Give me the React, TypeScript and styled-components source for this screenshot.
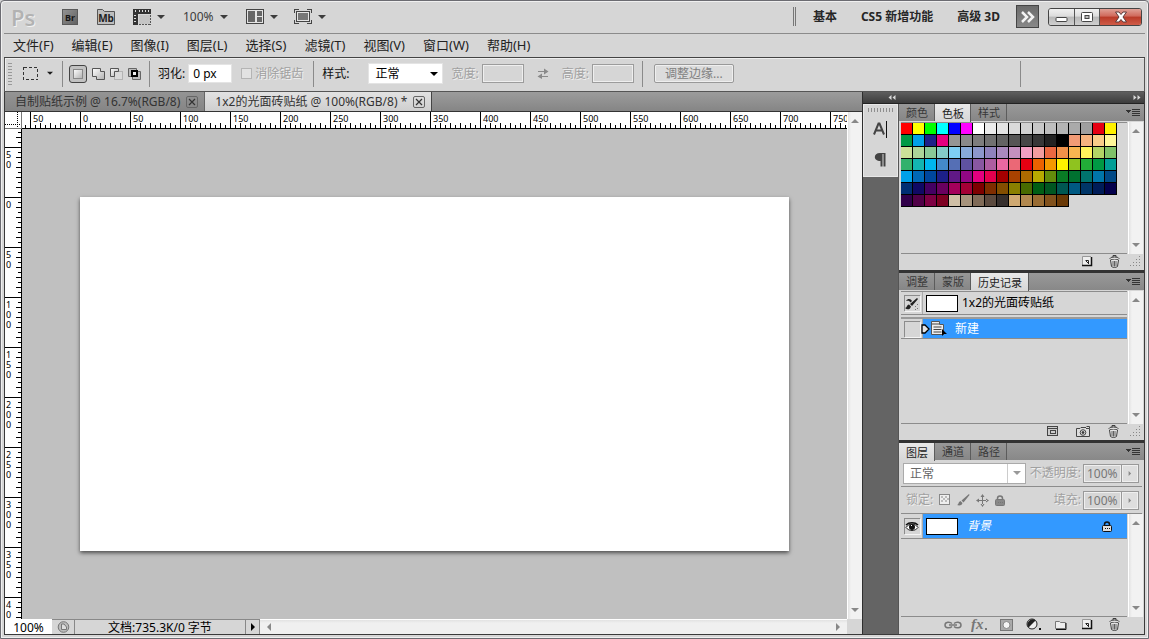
import React from "react";
import styled, { createGlobalStyle, css } from "styled-components";

const FONT = '"Noto Sans", "Noto Sans CJK SC", sans-serif';

const GlobalStyle = createGlobalStyle`
  *, *::before, *::after { box-sizing: border-box; }
  body { margin: 0; background: #d6d6d6; font-family: ${FONT}; font-size: 12px; color: #1c1c1c; }
  button, input, select { font-family: inherit; font-size: 12px; color: inherit; margin: 0; padding: 0; border: 0; border-radius: 0; background: none; }
  h1 { margin: 0; }
  svg { display: block; flex: none; }
`;

/* ---------- window frame ---------- */

const Window = styled.div`
  display: flex;
  flex-direction: column;
  height: 100vh;
  min-height: 560px;
  padding: 0 3px 3px;
  overflow: hidden;
  background: #d6d6d6;
  border: 1px solid #6c6c72;
  border-radius: 4px 4px 0 0;
  box-shadow: inset 1px 1px 0 #f0f0f0, inset -1px -1px 0 #f0f0f0;
`;

const TitleBar = styled.header`
  display: flex;
  align-items: center;
  flex: none;
  height: 33px;
  padding: 0 3px 1px 7px;
  border-bottom: 1px solid #8b8b8b;
  white-space: nowrap;
`;

const Logo = styled.h1`
  width: 51px;
  font: 600 22px/30px "Open Sans", sans-serif;
  color: #b2b2b2;
  text-shadow: 1px 1px 0 #f2f2f2;
`;

const ToolButton = styled.button<{ $w: number }>`
  display: flex;
  align-items: center;
  gap: 6px;
  flex: none;
  width: ${(p) => p.$w}px;
  height: 24px;
  color: #3c3c3c;
`;

const Spacer = styled.div`
  flex: 1;
`;

const DoubleRule = styled.div`
  width: 3px;
  height: 19px;
  margin-right: 17px;
  border: solid #777;
  border-width: 0 1px;
`;

const Workspaces = styled.nav`
  display: flex;
  align-items: center;
  gap: 24px;
  margin-right: 16px;
`;

const WorkspaceButton = styled.button`
  font-weight: 700;
  line-height: 20px;
  color: #262626;
`;

const MoreButton = styled.button`
  display: flex;
  align-items: center;
  justify-content: center;
  width: 23px;
  height: 23px;
  margin-right: 9px;
  background: linear-gradient(#6b6b6b, #888);
  border: 1px solid #444;
`;

const WindowButtons = styled.div`
  display: flex;
  height: 18px;
  border: 1px solid #444;
  border-radius: 3px;
  overflow: hidden;
`;

const WindowButton = styled.button<{ $close?: boolean }>`
  display: flex;
  align-items: center;
  justify-content: center;
  width: ${(p) => (p.$close ? 42 : 25)}px;
  background: ${(p) =>
    p.$close
      ? "linear-gradient(#e0a096, #d0685a 45%, #b93a28 50%, #cf5c48)"
      : "linear-gradient(#f0f0f0, #dcdcdc 45%, #b8b8b8 50%, #cfcfcf)"};
  & + & { border-left: 1px solid #555; }
`;

const MenuBar = styled.nav`
  display: flex;
  align-items: center;
  gap: 18px;
  flex: none;
  height: 24px;
  padding: 0 9px 2px;
  border-bottom: 1px solid #444;
`;

const MenuItem = styled.button`
  font-size: 13px;
  line-height: 20px;
  color: #222;
  white-space: nowrap;
`;

/* ---------- options bar ---------- */

const OptionsBar = styled.section`
  display: flex;
  align-items: center;
  flex: none;
  height: 34px;
  padding: 0 0 2px 3px;
  border: solid #555;
  border-width: 0 1px 1px;
  box-shadow: inset 1px 1px 0 #efefef;
  white-space: nowrap;
`;

const Grip = styled.div`
  width: 4px;
  height: 24px;
  background: radial-gradient(circle, #999 0 1px, transparent 1px) 0 0 / 2px 3px;
`;

const Rule = styled.div<{ $l: number; $r: number }>`
  width: 1px;
  height: 26px;
  flex: none;
  margin: 0 ${(p) => p.$r}px 0 ${(p) => p.$l}px;
  background: #8a8a8a;
`;

const ToolPicker = styled.button`
  display: flex;
  align-items: center;
  gap: 9px;
  margin-left: 11px;
`;

const ModeGroup = styled.div`
  display: flex;
  align-items: center;
  gap: 4px;
`;

const ModeButton = styled.button<{ $on?: boolean }>`
  display: flex;
  align-items: center;
  justify-content: center;
  width: ${(p) => (p.$on ? 18 : 14)}px;
  height: 18px;
  ${(p) =>
    p.$on &&
    css`
      border: 1px solid #444;
      border-radius: 3px;
      background: #c2c2c2;
    `}
`;

const Label = styled.label<{ $off?: boolean; $before?: number }>`
  display: flex;
  align-items: center;
  margin-left: ${(p) => p.$before ?? 0}px;
  line-height: 18px;
  color: ${(p) => (p.$off ? "#a0a0a0" : "#111")};
  ${(p) => p.$off && "text-shadow: 1px 1px 0 #f0f0f0;"}
`;

const TextBox = styled.input<{ $w: number }>`
  width: ${(p) => p.$w}px;
  height: 19px;
  margin-left: 3px;
  padding: 0 4px;
  background: #fff;
  border: 1px solid #e4e4e4;
  color: #000;
  &:disabled { background: #d6d6d6; border: 1px solid #9c9c9c; box-shadow: inset 0 0 0 1px #efefef; }
`;

const TickBox = styled.input`
  appearance: none;
  width: 11px;
  height: 11px;
  margin-right: 3px;
  background: #e2e2e2;
  border: 1px solid #b4b4b4;
`;

const SelectWrap = styled.span<{ $w: number; $off?: boolean; $before?: number }>`
  display: flex;
  align-items: center;
  width: ${(p) => p.$w}px;
  height: 21px;
  margin-left: ${(p) => p.$before ?? 0}px;
  padding-right: 4px;
  background: #fff;
  border: 1px solid ${(p) => (p.$off ? "#aaa" : "#e4e4e4")};
  color: ${(p) => (p.$off ? "#999" : "#000")};
`;

const Select = styled.select<{ $divided?: boolean }>`
  appearance: none;
  flex: 1;
  min-width: 0;
  height: 100%;
  padding-left: 6px;
  outline: 0;
  color: ${(p) => (p.$divided ? "#666" : "#000")};
  ${(p) => p.$divided && "margin-right: 5px; border-right: 1px solid #ccc;"}
`;

const SwapButton = styled.button`
  margin: 0 0 0 13px;
`;

const EdgeButton = styled.button`
  width: 80px;
  height: 19px;
  line-height: 17px;
  color: #808080;
  background: #dcdcdc;
  border: 1px solid #999;
  border-radius: 2px;
  box-shadow: inset 0 0 0 1px #efefef;
`;

/* ---------- main area ---------- */

const Main = styled.main`
  display: flex;
  flex: 1;
  min-height: 0;
  border: solid #3a3a3a;
  border-width: 0 1px 1px;
`;

const DocumentArea = styled.section`
  display: flex;
  flex-direction: column;
  flex: 1;
  min-width: 0;
`;

const DocTabs = styled.div`
  display: flex;
  flex: none;
  height: 20px;
  background: linear-gradient(#9c9c9c, #858585);
  border-bottom: 1px solid #333;
`;

const DocTab = styled.div<{ $on?: boolean }>`
  display: flex;
  align-items: center;
  gap: 6px;
  padding: 0 6px 0 10px;
  color: #333;
  white-space: nowrap;
  background: ${(p) => (p.$on ? "linear-gradient(#e2e2e2, #cfcfcf)" : "linear-gradient(#949494, #858585)")};
  border-right: 1px solid ${(p) => (p.$on ? "#444" : "#666")};
`;

const DocTabName = styled.button`
  line-height: 18px;
`;

const CloseTab = styled.button`
  display: flex;
  align-items: center;
  justify-content: center;
  width: 12px;
  height: 12px;
  border: 1px solid #666;
  border-radius: 2px;
`;

const Workspace = styled.div`
  display: grid;
  grid-template-columns: 17px minmax(0, 1fr) 15px;
  grid-template-rows: 17px minmax(0, 1fr) 15px;
  flex: 1;
  min-height: 0;
`;

const RulerCorner = styled.div`
  background:
    repeating-linear-gradient(90deg, #000 0 1px, transparent 1px 2px) 0 12px / 100% 1px no-repeat,
    repeating-linear-gradient(#000 0 1px, transparent 1px 2px) 12px 0 / 1px 100% no-repeat,
    #fff;
  border: solid #777;
  border-width: 0 1px 1px 0;
`;

const RulerTop = styled.div`
  display: flex;
  overflow: hidden;
  padding-left: 8px;
  background:
    repeating-linear-gradient(90deg, transparent 0 3px, #000 3px 4px, transparent 4px 10px) 0 100% / 8px 3px no-repeat,
    #fff;
  border-bottom: 1px solid #000;
`;

const TopUnit = styled.span`
  flex: none;
  width: 50px;
  padding-left: 2px;
  font-size: 9px;
  line-height: 13px;
  color: #000;
  border-left: 1px solid #000;
  background:
    repeating-linear-gradient(90deg, transparent 0 4px, #000 4px 5px, transparent 5px 10px) 0 100% / 100% 3px no-repeat,
    repeating-linear-gradient(90deg, transparent 0 9px, #000 9px 10px) 0 100% / 49px 5px no-repeat;
`;

const RulerLeft = styled.div`
  display: flex;
  flex-direction: column;
  overflow: hidden;
  padding-top: 18px;
  background:
    repeating-linear-gradient(transparent 0 3px, #000 3px 4px, transparent 4px 10px) 100% 0 / 3px 18px no-repeat,
    repeating-linear-gradient(transparent 0 8px, #000 8px 9px, transparent 9px 18px) 100% 0 / 5px 18px no-repeat,
    #fff;
  border-right: 1px solid #000;
`;

const LeftUnit = styled.span`
  display: flex;
  flex-direction: column;
  flex: none;
  height: 50px;
  padding: 2px 0 0 1px;
  font-size: 9px;
  line-height: 10px;
  color: #000;
  border-top: 1px solid #000;
  background:
    repeating-linear-gradient(transparent 0 4px, #000 4px 5px, transparent 5px 10px) 100% 0 / 3px 100% no-repeat,
    repeating-linear-gradient(transparent 0 9px, #000 9px 10px) 100% 0 / 5px 49px no-repeat;
`;

const Canvas = styled.div`
  display: flex;
  align-items: center;
  justify-content: center;
  overflow: hidden;
  background: #c0c0c0;
`;

const Paper = styled.div`
  flex: none;
  width: 709px;
  height: 354px;
  background: #fff;
  box-shadow: 0 2px 4px rgba(0, 0, 0, 0.6);
`;

const VScroll = styled.div`
  display: flex;
  flex-direction: column;
  align-items: center;
  justify-content: space-between;
  width: 15px;
  padding: 6px 0;
  color: #888;
  background: linear-gradient(90deg, #fff 0 1px, #e2e2e2 1px, #f2f2f2 4px);
`;

const TallScroll = styled(VScroll)`
  grid-column: 3;
  grid-row: 1 / 3;
`;

const StatusBar = styled.footer`
  display: flex;
  align-items: stretch;
  grid-column: 1 / 3;
  min-width: 0;
  color: #000;
`;

const StatusZoom = styled.input`
  width: 47px;
  padding: 2px 0 0;
  text-align: center;
  background: #fff;
`;

const StatusCell = styled.div<{ $w: number }>`
  display: flex;
  align-items: center;
  justify-content: center;
  flex: none;
  width: ${(p) => p.$w}px;
  line-height: 15px;
  white-space: nowrap;
  background: #d6d6d6;
  border: solid #888;
  border-width: 1px 1px 0 0;
`;

const HScroll = styled.div`
  display: flex;
  align-items: center;
  justify-content: space-between;
  flex: 1;
  padding: 0 6px;
  color: #888;
  background: linear-gradient(#fff 0 1px, #e2e2e2 1px, #f0f0f0 4px);
`;

const ScrollButton = styled.button`
  display: flex;
`;

/* ---------- dock ---------- */

const Dock = styled.aside`
  display: flex;
  flex-direction: column;
  flex: none;
  width: 282px;
  border-left: 1px solid #2e2e2e;
`;

const DockHeader = styled.div`
  display: flex;
  align-items: center;
  justify-content: space-between;
  flex: none;
  height: 12px;
  padding: 0 3px 0 25px;
  color: #d8d8d8;
  background: linear-gradient(#5e5e5e, #3c3c3c);
  border-bottom: 1px solid #222;
`;

const DockBody = styled.div`
  display: flex;
  flex: 1;
  min-height: 0;
  background: #646464;
`;

const IconColumn = styled.div`
  width: 36px;
  border-right: 1px solid #555;
`;

const IconStack = styled.div`
  display: flex;
  flex-direction: column;
  align-items: center;
  gap: 3px;
  height: 73px;
  padding-top: 3px;
  background: #d6d6d6;
  border: 1px solid #e8e8e8;
`;

const DotGrip = styled.div`
  flex: none;
  width: 27px;
  height: 4px;
  background: radial-gradient(circle, #8e8e8e 0 1px, transparent 1px) 0 0 / 3px 2px;
`;

const StackButton = styled.button`
  display: flex;
  align-items: center;
  justify-content: center;
  flex: none;
  height: 28px;
`;

const LockButton = styled.button`
  display: flex;
  align-items: center;
  height: 18px;
`;

const Panels = styled.div`
  display: flex;
  flex-direction: column;
  gap: 3px;
  flex: 1;
  min-width: 0;
  background: #333;
`;

const Panel = styled.section<{ $h?: number }>`
  display: flex;
  flex-direction: column;
  ${(p) => (p.$h ? `flex: none; height: ${p.$h}px;` : "flex: 1; min-height: 0;")}
  background: #d6d6d6;
`;

const PanelTabs = styled.div`
  display: flex;
  flex: none;
  height: 17px;
  padding-right: 4px;
  background: linear-gradient(#999, #888);
`;

const PanelTab = styled.button<{ $on?: boolean }>`
  height: ${(p) => (p.$on ? 18 : 17)}px;
  padding: 1px 6px 0 7px;
  font-size: 11px;
  line-height: 16px;
  color: ${(p) => (p.$on ? "#222" : "#383838")};
  background: ${(p) => (p.$on ? "linear-gradient(#e8e8e8, #d6d6d6)" : "linear-gradient(#989898, #868686)")};
  border-right: 1px solid #5c5c5c;
`;

const PanelMenu = styled.button`
  display: flex;
  align-items: center;
  margin-left: auto;
`;

const PanelBody = styled.div`
  display: flex;
  flex: 1;
  min-height: 0;
  padding: 1px 1px 0 2px;
`;

const PanelList = styled.div`
  flex: 1;
  min-width: 0;
  margin-right: 1px;
  border: solid #8c8c8c;
  border-width: 1px 0;
`;

const FooterRow = styled.div`
  display: flex;
  flex: none;
  justify-content: flex-end;
  padding-right: 1px;
`;

const PanelFooter = styled.div<{ $slot: number; $h: number }>`
  display: grid;
  grid-auto-flow: column;
  grid-auto-columns: ${(p) => p.$slot}px;
  justify-content: end;
  align-items: center;
  flex: none;
  height: ${(p) => p.$h}px;
  padding-bottom: 2px;
  color: #3c3c3c;
`;

const FooterButton = styled.button`
  display: flex;
  justify-content: center;
`;

const Resizer = styled.div`
  align-self: flex-end;
  width: 15px;
  height: 14px;
  padding-left: 2px;
`;

const Swatches = styled.div`
  display: grid;
  grid-template-columns: repeat(18, 12px);
`;

const Swatch = styled.button<{ $c: string }>`
  height: 12px;
  background: ${(p) => p.$c};
  border: solid #000;
  border-width: 0 1px 1px 0;
`;

const HistoryRow = styled.div<{ $h: number }>`
  display: flex;
  align-items: center;
  height: ${(p) => p.$h}px;
  border-bottom: 1px solid #8c8c8c;
  color: #000;
  line-height: 16px;
`;

const MarkCell = styled.button`
  display: flex;
  align-items: center;
  justify-content: center;
  flex: none;
  align-self: stretch;
  width: 22px;
  border-right: 1px solid #aaa;
`;

const MarkBox = styled.span`
  display: flex;
  align-items: center;
  justify-content: center;
  width: 16px;
  height: 16px;
  border: solid #8c8c8c;
  border-width: 1px 0 0 1px;
  box-shadow: 1px 1px 0 #f4f4f4;
`;

const Thumb = styled.span`
  flex: none;
  width: 32px;
  height: 17px;
  margin: 0 4px 0 3px;
  background: #fff;
  border: 1px solid #000;
`;

const Selected = styled.div`
  display: flex;
  align-items: center;
  flex: 1;
  align-self: stretch;
  color: #fff;
  background: #3399ff;
`;

const StepMark = styled.span`
  width: 10px;
  margin-left: -2px;
`;

const StepName = styled.span`
  padding-left: 8px;
`;

const HistoryGap = styled.div`
  height: 4px;
  border-bottom: 2px solid #9a9a9a;
`;

const LayerName = styled.span`
  flex: 1;
  padding-left: 5px;
  font-style: italic;
`;

const LayerLock = styled.span`
  padding-right: 15px;
`;

const LayerControls = styled.div`
  display: flex;
  align-items: center;
  justify-content: space-between;
  flex: none;
  height: 27px;
  margin: 0 2px;
  padding: 0 3px 0 2px;
  border-bottom: 1px solid #8c8c8c;
  white-space: nowrap;
`;

const LayerBody = styled(PanelBody)`
  padding-top: 0;
`;

const LayerList = styled(PanelList)`
  border-top: 0;
`;

const Locks = styled.div`
  display: flex;
  align-items: center;
  gap: 6px;
  padding-left: 3px;
  color: #8c8c8c;
`;

const PercentField = styled.span`
  display: flex;
  align-items: center;
  margin-left: 2px;
`;

const PercentInput = styled.input`
  width: 39px;
  height: 19px;
  padding-left: 3px;
  color: #777;
  background: #d6d6d6;
  border: 1px solid #999;
  box-shadow: inset 0 0 0 1px #efefef;
`;

const PercentArrow = styled.button`
  display: flex;
  align-items: center;
  justify-content: center;
  width: 17px;
  height: 19px;
  color: #888;
  background: #dedede;
  border: 1px solid #999;
  border-left: 0;
  box-shadow: inset 0 0 0 1px #efefef;
`;

/* ---------- icons ---------- */

type Dir = "up" | "down" | "left" | "right";

const arrowPaths: Record<Dir, string> = {
  up: "M0 5L4 1L8 5Z",
  down: "M0 1L4 5L8 1Z",
  left: "M5 0L1 4L5 8Z",
  right: "M1 0L5 4L1 8Z",
};

const Arrow = ({ dir = "down", size = 8 }: { dir?: Dir; size?: number }) => {
  const wide = dir === "up" || dir === "down";
  return (
    <svg width={wide ? size : (size * 6) / 8} height={wide ? (size * 6) / 8 : size} viewBox={wide ? "0 0 8 6" : "0 0 6 8"}>
      <path d={arrowPaths[dir]} fill="currentColor" />
    </svg>
  );
};

const BridgeIcon = () => (
  <svg width="16" height="16">
    <defs>
      <linearGradient id="br" x2="1" y2="1">
        <stop stopColor="#949494" />
        <stop offset="1" stopColor="#606060" />
      </linearGradient>
    </defs>
    <rect x=".5" y=".5" width="15" height="15" fill="url(#br)" stroke="#5a5a5a" />
    <text x="8" y="11.5" textAnchor="middle" fontSize="9" fontWeight="700" fill="#161616">Br</text>
  </svg>
);

const MiniBridgeIcon = () => (
  <svg width="19" height="16">
    <path d="M.5 15.500V.5H5.500L7.500 2.500H17.500V15.500Z" fill="#bdbdbd" stroke="#555" />
    <text x="9" y="12.500" textAnchor="middle" fontSize="10" fontWeight="700" fill="#222">Mb</text>
  </svg>
);

const ExtrasIcon = () => (
  <svg width="18" height="16" shapeRendering="crispEdges">
    <path d="M0 0H18V5H5V16H0Z" fill="#333" />
    <path d="M2 1h1v2H2zM6 1h1v2H6zM9 1h1v2H9zM12 1h1v2h-1zM15 1h1v2h-1zM1 6h2v1H1zM1 9h2v1H1zM1 12h2v1H1z" fill="#ddd" />
    <rect x="6" y="6" width="11" height="9" fill="#c4c4c4" />
    <path d="M17.500 6V16M6 15.500H18" stroke="#555" strokeDasharray="2 1" fill="none" />
  </svg>
);

const ArrangeIcon = () => (
  <svg width="18" height="15" shapeRendering="crispEdges">
    <rect x=".5" y=".5" width="17" height="14" fill="#e4e4e4" stroke="#444" />
    <path d="M2 2h7v11H2zM11 2h5v5h-5zM11 8h5v5h-5z" fill="#666" />
  </svg>
);

const ScreenIcon = () => (
  <svg width="18" height="15" shapeRendering="crispEdges">
    <path d="M.5 4V.5H5M13 .5H17.500V4M17.500 11V14.500H13M5 14.500H.5V11" fill="none" stroke="#444" />
    <rect x="2.500" y="2.500" width="13" height="10" fill="#e4e4e4" stroke="#444" />
    <rect x="4" y="4" width="10" height="7" fill="#777" />
  </svg>
);

const ChevronsIcon = () => (
  <svg width="15" height="12" fill="none" stroke="#f2f2f2" strokeWidth="2.500">
    <path d="M2 1L7 6L2 11M8 1L13 6L8 11" />
  </svg>
);

const MinimizeIcon = () => (
  <svg width="13" height="10">
    <rect x="1" y="5.500" width="11" height="4" rx="1" fill="#fff" stroke="#444" />
  </svg>
);

const MaximizeIcon = () => (
  <svg width="12" height="10">
    <rect x=".5" y=".5" width="11" height="9" rx="1" fill="#fff" stroke="#444" />
    <rect x="4" y="3.500" width="4" height="3" fill="#bbb" stroke="#444" />
  </svg>
);

const CloseIcon = () => (
  <svg width="14" height="12">
    <path d="M1.500 1H5L7 3.500L9 1H12.500L9 6L12.500 11H9L7 8.500L5 11H1.500L5 6Z" fill="#fff" stroke="#5c3a3a" />
  </svg>
);

const MarqueeIcon = () => (
  <svg width="15" height="13" shapeRendering="crispEdges">
    <rect x=".5" y=".5" width="14" height="12" fill="none" stroke="#333" strokeDasharray="3 2" />
  </svg>
);

const modes = [
  { name: "新选区", art: <rect x="2.500" y="2.500" width="9" height="9" fill="url(#mode)" stroke="#888" /> },
  { name: "添加到选区", art: <path d="M1.500 1.500H9.500V4.500H13.500V12.500H5.500V9.500H1.500Z" fill="url(#mode)" stroke="#555" /> },
  {
    name: "从选区减去",
    art: (
      <>
        <rect x="5.500" y="4.500" width="8" height="8" fill="#dadada" stroke="#b4b4b4" />
        <path d="M1.500 1.500H9.500V4.500H5.500V9.500H1.500Z" fill="url(#mode)" stroke="#555" />
      </>
    ),
  },
  {
    name: "与选区交叉",
    art: (
      <>
        <path d="M1.500 1.500H9.500V4.500H13.500V12.500H5.500V9.500H1.500Z" fill="#bbb" stroke="#666" />
        <rect x="5" y="4" width="5" height="5" fill="#eee" stroke="#000" strokeWidth="2" />
      </>
    ),
  },
];

const ModeIcon = ({ children }: { children: React.ReactNode }) => (
  <svg width="14" height="14">
    <defs>
      <linearGradient id="mode" x2="1" y2="1">
        <stop stopColor="#fff" />
        <stop offset="1" stopColor="#b0b0b0" />
      </linearGradient>
    </defs>
    {children}
  </svg>
);

const SwapIcon = () => (
  <svg width="12" height="11" fill="#8a8a8a">
    <path d="M1 3H7V0.500L11.500 3.500L7 6.500V4H1ZM11 8H5V5.500L.5 8.500L5 11V9H11Z" />
  </svg>
);

const SmallX = () => (
  <svg width="8" height="8" stroke="#333" strokeWidth="1.200">
    <path d="M1 1L7 7M7 1L1 7" />
  </svg>
);

const MenuLines = () => (
  <svg width="14" height="9" shapeRendering="crispEdges" fill="#333">
    <path d="M0 2H5L2.500 5ZM6 1h8v1H6zM6 3h8v1H6zM6 5h8v1H6zM6 7h8v1H6z" />
  </svg>
);

const CharacterIcon = () => (
  <svg width="15" height="18" stroke="#444" fill="none">
    <path d="M1 14.500L5.500 3.500H6.500L11 14.500M3 10.500H9" strokeWidth="2" />
    <path d="M13.500 1V18" stroke="#111" />
  </svg>
);

const ParagraphIcon = () => (
  <svg width="13" height="16">
    <path d="M6 1H11.500V14.500H9.500V2H8.500V14.500H6.500V9C-1 9 -1 1 6 1Z" fill="#444" />
  </svg>
);

const DoubleArrow = ({ dir }: { dir: "left" | "right" }) => (
  <svg width="8" height="5" fill="currentColor">
    <path d={dir === "left" ? "M3.500 0V5L.5 2.500ZM7.500 0V5L4.500 2.500Z" : "M.5 0V5L3.500 2.500ZM4.500 0V5L7.500 2.500Z"} />
  </svg>
);

const NewIcon = () => (
  <svg width="11" height="11">
    <rect x="1" y="1" width="8" height="8" fill="#eee" />
    <path d="M.5 9V.5H9" fill="none" stroke="#999" />
    <path d="M9.500 1V9.500H0" fill="none" stroke="#111" strokeWidth="1.500" />
    <path d="M3.500 4.500H6.500V8M4 5L6.500 7.500" fill="none" stroke="#222" />
  </svg>
);

const TrashIcon = () => (
  <svg width="11" height="13" fill="none" stroke="currentColor">
    <ellipse cx="5.500" cy="3.500" rx="4.500" ry="1.500" fill="#ddd" />
    <path d="M4 2V.5H7V2" />
    <path d="M1.500 5L2.500 11.500C4 12.700 7 12.700 8.500 11.500L9.500 5" fill="#e4e4e4" />
    <path d="M4 6V11M5.500 6V11.500M7 6V11" strokeWidth=".8" />
  </svg>
);

const SnapshotDocIcon = () => (
  <svg width="12" height="10" shapeRendering="crispEdges" fill="none" stroke="#444">
    <rect x=".5" y=".5" width="10" height="9" fill="#ccc" />
    <path d="M1 2.500H10M3 4.500H8V7.500H3Z" />
  </svg>
);

const CameraIcon = () => (
  <svg width="15" height="11" fill="none" stroke="#444">
    <path d="M.5 2.500H4L5 1.500H10M10.500 .5H13.500V2.500M.5 2.500V10.500H13.500V2.500H10" fill="#ddd" />
    <circle cx="7" cy="6.500" r="2.800" />
    <circle cx="7" cy="6.500" r="1" fill="#222" />
  </svg>
);

const ResizeDots = () => (
  <svg width="12" height="12" fill="#888" shapeRendering="crispEdges">
    {[0, 1, 2, 3].flatMap((r) =>
      Array.from({ length: r + 1 }, (_, c) => <rect key={`${r}-${c}`} x={9 - c * 3} y={r * 3} width="1" height="1" />)
    )}
  </svg>
);

const BrushSourceIcon = () => (
  <svg width="14" height="14" fill="#222">
    <path d="M0 11C2 11 1.500 8 4 7.500L6 9.500C5 13 2 13 0 11ZM5 7L12 1L13 2L7 9Z" />
    <path d="M1 4C3 1 6 2 7 4L5.500 5.500C4.500 3.500 3 3.500 1 4Z" />
    <path d="M10 9h1v1h-1zM12 7h1v1h-1zM12 11h1v1h-1zM10 12h1v1h-1z" fill="#777" />
  </svg>
);

const StepPointer = () => (
  <svg width="9" height="10">
    <path d="M1 1H4L8 5L4 9H1Z" fill="#e4e4e4" stroke="#000" strokeWidth="1.300" />
  </svg>
);

const StepIcon = () => (
  <svg width="16" height="15">
    <path d="M.5 13.500V.5H8.500V3.500H12.500V13.500Z" fill="#eee" stroke="#555" />
    <path d="M1 3H8M2.500 6H10.500M2.500 8.500H10.500M2.500 11H10.500" stroke="#444" />
    <path d="M11 8L16 13L13 13L11 15Z" fill="#000" />
  </svg>
);

const EyeIcon = () => (
  <svg width="14" height="10">
    <path d="M1 5.500C4 1 10 1 13 5.500C10 9.500 4 9.500 1 5.500Z" fill="#fff" stroke="#222" />
    <circle cx="7" cy="5" r="3" fill="#111" />
    <path d="M1 3C4 0 10 0 13 3" stroke="#111" strokeWidth="1.500" fill="none" />
    <rect x="6" y="3" width="1" height="1" fill="#fff" />
  </svg>
);

const LockIcon = ({ color = "#777", body = "#888" }: { color?: string; body?: string }) => (
  <svg width="10" height="11">
    <path d="M2.500 5V3.500C2.500 .2 7.500 .2 7.500 3.500V5" fill="none" stroke={color} strokeWidth="1.500" />
    <rect x=".5" y="4.500" width="9" height="6" rx="1" fill={body} stroke={color} />
    <path d="M3 7.500H8" stroke={color} strokeDasharray="1 1" />
  </svg>
);

const TransparencyIcon = () => (
  <svg width="12" height="12" shapeRendering="crispEdges">
    <rect x=".5" y=".5" width="10" height="10" fill="#eee" stroke="#888" />
    <path d="M2 2h2v2H2zM6 2h2v2H6zM4 4h2v2H4zM8 4h2v2H8zM2 6h2v2H2zM6 6h2v2H6z" fill="#bbb" />
  </svg>
);

const BrushIcon = () => (
  <svg width="13" height="12" fill="#777">
    <path d="M0 11C2 10.500 1 8 3.500 7L5.500 9C5 11.500 2 12 0 11ZM4.500 6.500L12 0L12.500 1L6.500 8.500Z" />
  </svg>
);

const MoveIcon = () => (
  <svg width="13" height="13" fill="#777">
    <path d="M6 2h1v9H6zM2 6h9v1H2zM6.500 0L8.500 3H4.500ZM6.500 13L8.500 10H4.500ZM0 6.500L3 4.500V8.500ZM13 6.500L10 4.500V8.500Z" />
  </svg>
);

const LinkIcon = () => (
  <svg width="18" height="8" fill="none" stroke="#777" strokeWidth="1.500">
    <path d="M8 2.500C6 .5 1 .5 1 4C1 7.500 6 7.500 8 5.500M10 2.500C12 .5 17 .5 17 4C17 7.500 12 7.500 10 5.500M5 4H13" />
  </svg>
);

const FxIcon = () => (
  <svg width="17" height="14" fill="#777">
    <text x="0" y="11" fontFamily="Liberation Serif, serif" fontStyle="italic" fontWeight="700" fontSize="15">fx</text>
    <rect x="14" y="10" width="2" height="2" />
  </svg>
);

const MaskIcon = () => (
  <svg width="14" height="12">
    <rect x=".5" y=".5" width="12" height="11" fill="#aaa" stroke="#777" />
    <circle cx="6.500" cy="6" r="3.500" fill="#f4f4f4" stroke="#888" />
  </svg>
);

const AdjustIcon = () => (
  <svg width="16" height="13">
    <circle cx="6" cy="6" r="5" fill="#eee" stroke="#222" />
    <path d="M9.500 2.500A5 5 0 0 0 2.500 9.500Z" fill="#222" />
    <rect x="13" y="10" width="2" height="2" fill="#111" />
  </svg>
);

const FolderIcon = () => (
  <svg width="12" height="10">
    <path d="M.5 8.500V1.500H4.500L5.500 2.500H10.500V8.500Z" fill="#eee" stroke="#777" />
    <path d="M11 3V9.500H1" stroke="#111" fill="none" />
  </svg>
);

const StatusIcon = () => (
  <svg width="13" height="12" fill="none" stroke="#777">
    <circle cx="6.500" cy="6" r="5.300" fill="#bbb" />
    <path d="M4.500 3V8.500H9.500V6L7 3Z" fill="#ddd" />
  </svg>
);

/* ---------- data ---------- */

const menus = ["文件(F)", "编辑(E)", "图像(I)", "图层(L)", "选择(S)", "滤镜(T)", "视图(V)", "窗口(W)", "帮助(H)"];
const workspaces = ["基本", "CS5 新增功能", "高级 3D"];
const topUnits = [50, ...Array.from({ length: 16 }, (_, i) => i * 50)];
const leftUnits = [50, ...Array.from({ length: 9 }, (_, i) => i * 50)];

const swatchColors = `
ff0000 ffff00 00ff00 00ffff 0000ff ff00ff ffffff ececec e4e4e4 dadada d1d1d1 c8c8c8 bebebe b4b4b4 aaaaaa 9f9f9f e60012 fff100
009944 00a0e9 1d2088 e4007f 959595 898989 7d7d7d 717171 636363 555555 464646 373737 222222 000000 f29b76 f6b37f facd89 fff799
cce198 acd598 89c997 84ccc9 7ecef4 88abda 8c97cb 8f82bc aa89bd c490bf f19ec2 f29c9f eb6841 f19149 f8b551 fff45c b3d465 80c269
32b16c 13b5b1 00b7ee 448aca 556fb5 5f52a0 8957a1 ae5da1 ea68a2 eb6876 e60012 eb6100 f39800 fff100 8fc31f 22ac38 009944 009e96
00a0e9 0068b7 00479d 1d2088 601986 920783 e4007f e5004f a40000 a84200 ac6a00 b7aa00 638c0b 097c25 007130 00736d 0075a9 004986
002e73 100964 440062 6a005f a4005b a40035 7d0000 7f2d00 834e00 8a8000 486a00 005e15 005621 005752 005982 003567 001c58 03004c
31004a 500047 7e0043 7d0022 cfbfa6 a6937c 806b58 5b4a3f 362f2d cfa972 b1884f 996c33 81511c 6a3906`
  .trim()
  .split(/\s+/);

/* ---------- composed parts ---------- */

const TabStrip = ({ tabs, active }: { tabs: string[]; active: number }) => (
  <PanelTabs role="tablist">
    {tabs.map((t, i) => (
      <PanelTab key={t} role="tab" aria-selected={i === active} $on={i === active}>
        {t}
      </PanelTab>
    ))}
    <PanelMenu aria-label="面板菜单">
      <MenuLines />
    </PanelMenu>
  </PanelTabs>
);

const PanelScroll = () => (
  <VScroll>
    <ScrollButton aria-label="向上滚动"><Arrow dir="up" /></ScrollButton>
    <ScrollButton aria-label="向下滚动"><Arrow /></ScrollButton>
  </VScroll>
);

const Percent = ({ label }: { label: string }) => (
  <Label $off>
    {label}
    <PercentField>
      <PercentInput defaultValue="100%" readOnly />
      <PercentArrow aria-label={label}><Arrow dir="right" size={5} /></PercentArrow>
    </PercentField>
  </Label>
);

type FooterItem = [string, React.ReactNode];

const Footer = ({ items, slot, h = 16, grip = true }: { items: FooterItem[]; slot: number; h?: number; grip?: boolean }) => (
  <FooterRow>
    <PanelFooter $slot={slot} $h={h}>
      {items.map(([name, icon]) => (
        <FooterButton key={name} aria-label={name}>{icon}</FooterButton>
      ))}
    </PanelFooter>
    <Resizer>{grip && <ResizeDots />}</Resizer>
  </FooterRow>
);

export default function App() {
  return (
    <>
      <GlobalStyle />
      <Window>
        <TitleBar>
          <Logo>Ps</Logo>
          <ToolButton $w={35} aria-label="Bridge"><BridgeIcon /></ToolButton>
          <ToolButton $w={36} aria-label="Mini Bridge"><MiniBridgeIcon /></ToolButton>
          <ToolButton $w={50} aria-label="查看额外内容"><ExtrasIcon /><Arrow /></ToolButton>
          <ToolButton $w={63}>100%<Arrow /></ToolButton>
          <ToolButton $w={48} aria-label="排列文档"><ArrangeIcon /><Arrow /></ToolButton>
          <ToolButton $w={40} aria-label="屏幕模式"><ScreenIcon /><Arrow /></ToolButton>
          <Spacer />
          <DoubleRule />
          <Workspaces>
            {workspaces.map((w) => <WorkspaceButton key={w}>{w}</WorkspaceButton>)}
          </Workspaces>
          <MoreButton aria-label="更多工作区"><ChevronsIcon /></MoreButton>
          <WindowButtons>
            <WindowButton aria-label="最小化"><MinimizeIcon /></WindowButton>
            <WindowButton aria-label="最大化"><MaximizeIcon /></WindowButton>
            <WindowButton aria-label="关闭" $close><CloseIcon /></WindowButton>
          </WindowButtons>
        </TitleBar>

        <MenuBar>
          {menus.map((m) => <MenuItem key={m}>{m}</MenuItem>)}
        </MenuBar>

        <OptionsBar>
          <Grip />
          <ToolPicker aria-label="矩形选框工具"><MarqueeIcon /><Arrow size={6} /></ToolPicker>
          <Rule $l={9} $r={6} />
          <ModeGroup>
            {modes.map((m, i) => (
              <ModeButton key={m.name} $on={i === 0} aria-label={m.name}><ModeIcon>{m.art}</ModeIcon></ModeButton>
            ))}
          </ModeGroup>
          <Rule $l={8} $r={8} />
          <Label>羽化:<TextBox $w={44} defaultValue="0 px" /></Label>
          <Label $off $before={9}><TickBox type="checkbox" disabled />消除锯齿</Label>
          <Rule $l={10} $r={8} />
          <Label htmlFor="style">样式:</Label>
          <SelectWrap $w={75} $before={19}>
            <Select id="style" defaultValue="正常"><option>正常</option></Select>
            <Arrow />
          </SelectWrap>
          <Label $off $before={8}>宽度:<TextBox $w={42} disabled /></Label>
          <SwapButton aria-label="高度和宽度互换"><SwapIcon /></SwapButton>
          <Label $off $before={13}>高度:<TextBox $w={42} disabled /></Label>
          <Rule $l={8} $r={11} />
          <EdgeButton>调整边缘...</EdgeButton>
          <Spacer />
          <Rule $l={0} $r={123} />
        </OptionsBar>

        <Main>
          <DocumentArea>
            <DocTabs>
              <DocTab>
                <DocTabName>自制贴纸示例 @ 16.7%(RGB/8)</DocTabName>
                <CloseTab aria-label="关闭文档"><SmallX /></CloseTab>
              </DocTab>
              <DocTab $on>
                <DocTabName>1x2的光面砖贴纸 @ 100%(RGB/8) *</DocTabName>
                <CloseTab aria-label="关闭文档"><SmallX /></CloseTab>
              </DocTab>
            </DocTabs>
            <Workspace>
              <RulerCorner />
              <RulerTop>
                {topUnits.map((n, i) => <TopUnit key={i}>{n}</TopUnit>)}
              </RulerTop>
              <TallScroll>
                <ScrollButton aria-label="向上滚动"><Arrow dir="up" /></ScrollButton>
                <ScrollButton aria-label="向下滚动"><Arrow /></ScrollButton>
              </TallScroll>
              <RulerLeft>
                {leftUnits.map((n, i) => (
                  <LeftUnit key={i}>
                    {String(n).split("").map((d, j) => <span key={j}>{d}</span>)}
                  </LeftUnit>
                ))}
              </RulerLeft>
              <Canvas><Paper /></Canvas>
              <StatusBar>
                <StatusZoom aria-label="缩放" defaultValue="100%" />
                <StatusCell $w={23}><StatusIcon /></StatusCell>
                <StatusCell $w={171}>文档:735.3K/0 字节</StatusCell>
                <StatusCell $w={14}><Arrow dir="right" /></StatusCell>
                <HScroll>
                  <ScrollButton aria-label="向左滚动"><Arrow dir="left" /></ScrollButton>
                  <ScrollButton aria-label="向右滚动"><Arrow dir="right" /></ScrollButton>
                </HScroll>
              </StatusBar>
            </Workspace>
          </DocumentArea>

          <Dock>
            <DockHeader>
              <DoubleArrow dir="left" />
              <DoubleArrow dir="right" />
            </DockHeader>
            <DockBody>
              <IconColumn>
                <IconStack>
                  <DotGrip />
                  <StackButton aria-label="字符"><CharacterIcon /></StackButton>
                  <StackButton aria-label="段落"><ParagraphIcon /></StackButton>
                </IconStack>
              </IconColumn>
              <Panels>
                <Panel $h={166}>
                  <TabStrip tabs={["颜色", "色板", "样式"]} active={1} />
                  <PanelBody>
                    <PanelList>
                      <Swatches>
                        {swatchColors.map((c, i) => <Swatch key={i} $c={`#${c}`} aria-label={`#${c}`} />)}
                      </Swatches>
                    </PanelList>
                    <PanelScroll />
                  </PanelBody>
                  <Footer slot={27} items={[["新建色板", <NewIcon />], ["删除色板", <TrashIcon />]]} />
                </Panel>

                <Panel $h={167}>
                  <TabStrip tabs={["调整", "蒙版", "历史记录"]} active={2} />
                  <PanelBody>
                    <PanelList>
                      <HistoryRow $h={23}>
                        <MarkCell aria-label="历史记录画笔源"><MarkBox><BrushSourceIcon /></MarkBox></MarkCell>
                        <Thumb />
                        1x2的光面砖贴纸
                      </HistoryRow>
                      <HistoryGap />
                      <HistoryRow $h={20}>
                        <MarkCell aria-label="设置源"><MarkBox /></MarkCell>
                        <Selected>
                          <StepMark><StepPointer /></StepMark>
                          <StepIcon />
                          <StepName>新建</StepName>
                        </Selected>
                      </HistoryRow>
                    </PanelList>
                    <PanelScroll />
                  </PanelBody>
                  <Footer slot={30} items={[["从当前状态创建新文档", <SnapshotDocIcon />], ["创建新快照", <CameraIcon />], ["删除当前状态", <TrashIcon />]]} />
                </Panel>

                <Panel>
                  <TabStrip tabs={["图层", "通道", "路径"]} active={0} />
                  <LayerControls>
                    <SelectWrap $w={123} $off>
                      <Select $divided aria-label="混合模式" defaultValue="正常"><option>正常</option></Select>
                      <Arrow />
                    </SelectWrap>
                    <Percent label="不透明度:" />
                  </LayerControls>
                  <LayerControls>
                    <Locks>
                      <Label as="span" $off>锁定:</Label>
                      <LockButton aria-label="锁定透明像素"><TransparencyIcon /></LockButton>
                      <LockButton aria-label="锁定图像像素"><BrushIcon /></LockButton>
                      <LockButton aria-label="锁定位置"><MoveIcon /></LockButton>
                      <LockButton aria-label="锁定全部"><LockIcon /></LockButton>
                    </Locks>
                    <Percent label="填充:" />
                  </LayerControls>
                  <LayerBody>
                    <LayerList>
                      <HistoryRow $h={25}>
                        <MarkCell aria-label="显示图层"><MarkBox><EyeIcon /></MarkBox></MarkCell>
                        <Selected>
                          <Thumb />
                          <LayerName>背景</LayerName>
                          <LayerLock><LockIcon color="#111" body="#ddd" /></LayerLock>
                        </Selected>
                      </HistoryRow>
                    </LayerList>
                    <PanelScroll />
                  </LayerBody>
                  <Footer
                    slot={27}
                    h={17}
                    grip={false}
                    items={[
                      ["链接图层", <LinkIcon />],
                      ["图层样式", <FxIcon />],
                      ["图层蒙版", <MaskIcon />],
                      ["调整图层", <AdjustIcon />],
                      ["新建组", <FolderIcon />],
                      ["新建图层", <NewIcon />],
                      ["删除图层", <TrashIcon />],
                    ]}
                  />
                </Panel>
              </Panels>
            </DockBody>
          </Dock>
        </Main>
      </Window>
    </>
  );
}
